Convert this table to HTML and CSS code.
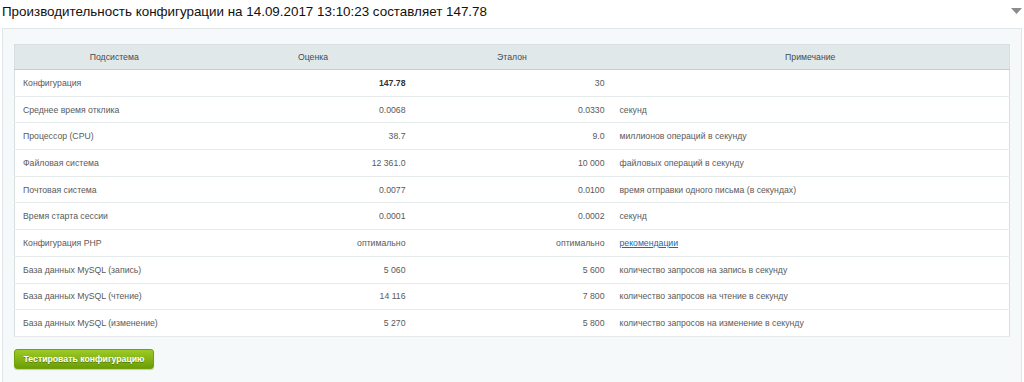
FILE: index.html
```html
<!DOCTYPE html>
<html lang="ru">
<head>
    <meta charset="UTF-8">
    <title>Производительность конфигурации</title>
    <link rel="stylesheet" href="styles.css">
</head>
<body>
    <div class="title-bar">
        <h1>Производительность конфигурации на 14.09.2017 13:10:23 составляет 147.78</h1>
        <svg class="toggle" width="11" height="6" viewBox="0 0 11 6"><path d="M0 0 H11 L5.5 6 Z" fill="#8c8c8c"/></svg>
    </div>

    <div class="panel">
        <table class="perf">
            <thead>
                <tr>
                    <th>Подсистема</th>
                    <th>Оценка</th>
                    <th>Эталон</th>
                    <th>Примечание</th>
                </tr>
            </thead>
            <tbody>
                <tr>
                    <td>Конфигурация</td>
                    <td class="num"><b>147.78</b></td>
                    <td class="num">30</td>
                    <td></td>
                </tr>
                <tr>
                    <td>Среднее время отклика</td>
                    <td class="num">0.0068</td>
                    <td class="num">0.0330</td>
                    <td>секунд</td>
                </tr>
                <tr>
                    <td>Процессор (CPU)</td>
                    <td class="num">38.7</td>
                    <td class="num">9.0</td>
                    <td>миллионов операций в секунду</td>
                </tr>
                <tr>
                    <td>Файловая система</td>
                    <td class="num">12 361.0</td>
                    <td class="num">10 000</td>
                    <td>файловых операций в секунду</td>
                </tr>
                <tr>
                    <td>Почтовая система</td>
                    <td class="num">0.0077</td>
                    <td class="num">0.0100</td>
                    <td>время отправки одного письма (в секундах)</td>
                </tr>
                <tr>
                    <td>Время старта сессии</td>
                    <td class="num">0.0001</td>
                    <td class="num">0.0002</td>
                    <td>секунд</td>
                </tr>
                <tr>
                    <td>Конфигурация PHP</td>
                    <td class="num">оптимально</td>
                    <td class="num">оптимально</td>
                    <td><a href="#">рекомендации</a></td>
                </tr>
                <tr>
                    <td>База данных MySQL (запись)</td>
                    <td class="num">5 060</td>
                    <td class="num">5 600</td>
                    <td>количество запросов на запись в секунду</td>
                </tr>
                <tr>
                    <td>База данных MySQL (чтение)</td>
                    <td class="num">14 116</td>
                    <td class="num">7 800</td>
                    <td>количество запросов на чтение в секунду</td>
                </tr>
                <tr>
                    <td>База данных MySQL (изменение)</td>
                    <td class="num">5 270</td>
                    <td class="num">5 800</td>
                    <td>количество запросов на изменение в секунду</td>
                </tr>
            </tbody>
        </table>

        <button class="test-btn">Тестировать конфигурацию</button>
    </div>
</body>
</html>
```

FILE: styles.css
```css
body {
    margin: 0;
    font-family: "Liberation Sans", Arial, sans-serif;
    background: #fff;
}
.title-bar {
    display: flex;
    justify-content: space-between;
    align-items: flex-start;
    height: 28px;
    padding: 0 2px;
}
.title-bar h1 {
    margin: 2px 0 0;
    font-size: 13.4px;
    font-weight: normal;
    line-height: 20px;
    color: #111;
}
.toggle {
    margin-top: 8px;
}
.panel {
    margin: 0 2px;
    padding: 15px 11px 13px;
    background: #f5f9f9;
    border: 1px solid #e1e7e8;
}
.perf {
    width: 100%;
    border-collapse: collapse;
    table-layout: fixed;
    background: #fff;
    border: 1px solid #d7dfe0;
    font-size: 8.7px;
    color: #5a5a5a;
}
.perf th {
    box-sizing: border-box;
    height: 25px;
    padding: 0 8px;
    background: #e1e8e9;
    border-bottom: 1px solid #c5cdcf;
    font-weight: normal;
    color: #464c4e;
    text-align: center;
}
.perf th:nth-child(1),
.perf th:nth-child(2),
.perf th:nth-child(3) {
    width: 20%;
}
.perf td {
    height: 25.7px;
    padding: 0 8px;
    border-bottom: 1px solid #e5eaeb;
    white-space: nowrap;
}
.perf td.num {
    text-align: right;
    padding-right: 7px;
}
.perf b {
    color: #333;
}
.perf a {
    color: #2067b0;
}
.test-btn {
    display: block;
    box-sizing: border-box;
    width: 140px;
    height: 20px;
    margin-top: 12px;
    padding: 0;
    border: 1px solid #72a00c;
    border-radius: 3px;
    background: linear-gradient(#9cca26, #6c9e06);
    box-shadow: 0 1px 1px rgba(0,0,0,0.2);
    color: #fff;
    font-family: "Liberation Sans", Arial, sans-serif;
    font-size: 8.7px;
    font-weight: bold;
    text-shadow: 0 1px 0 rgba(60,90,0,0.6);
    cursor: pointer;
}
```
